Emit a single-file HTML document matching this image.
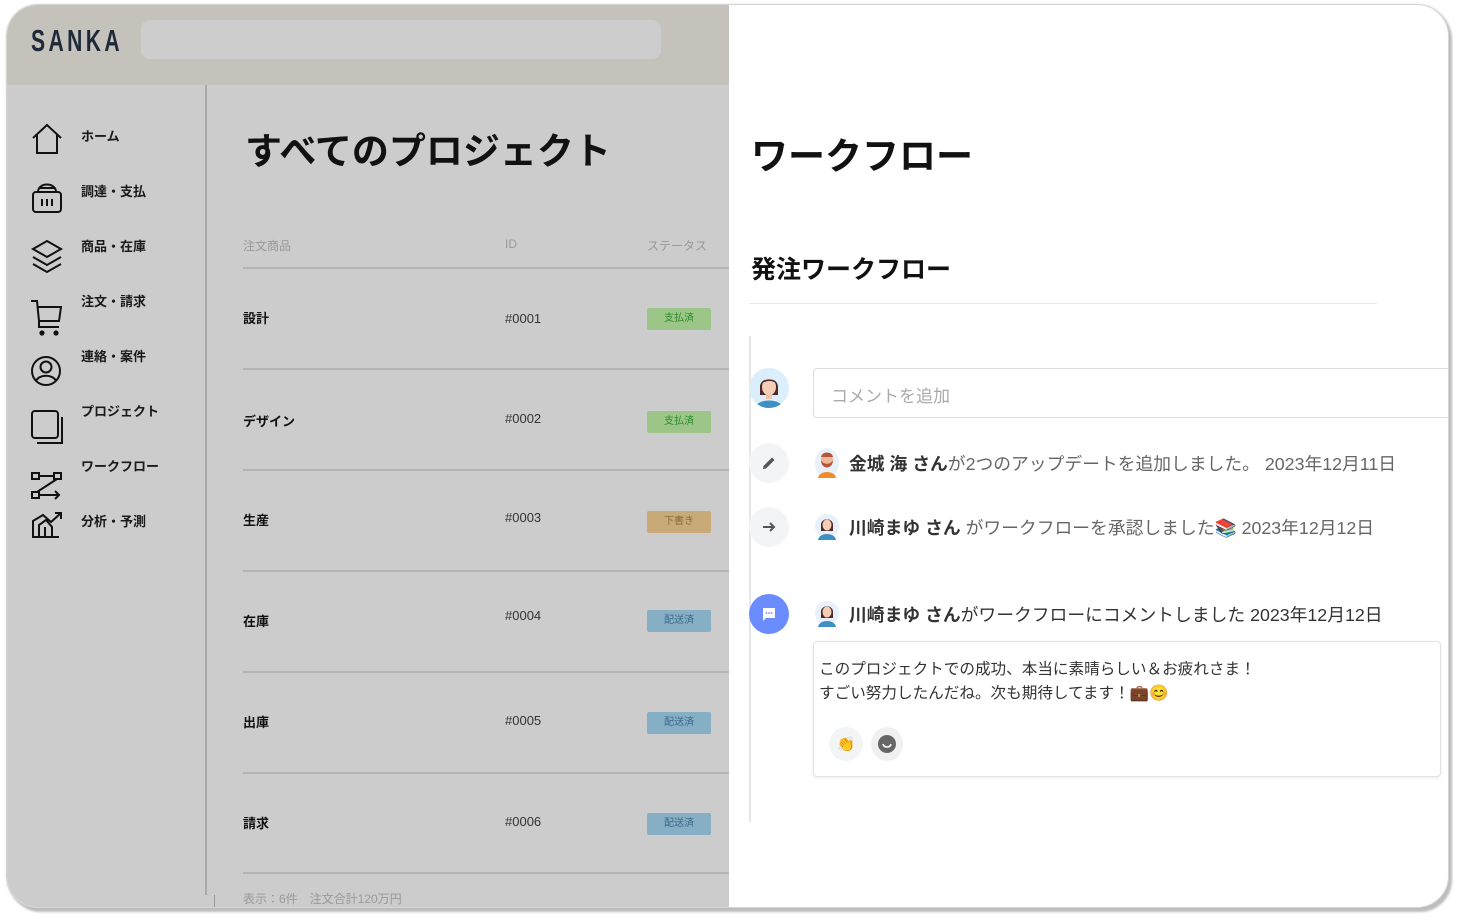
<!DOCTYPE html>
<html><head><meta charset="utf-8"><style>
*{margin:0;padding:0;box-sizing:border-box}
body{width:1464px;height:924px;background:#fff;position:relative;overflow:hidden;font-family:"Liberation Sans","Noto Sans CJK JP",sans-serif}
#dev{position:absolute;left:6px;top:4px;width:1443px;height:904px;border-radius:32px;overflow:hidden;border:1px solid #d4d4d4;box-shadow:3px 4px 2px #bdbdbd,1px 1px 3px #ccc;background:#fff}
.a{position:absolute;white-space:nowrap}
.nav{font-size:13px;font-weight:bold;color:#1a1a1a;left:74px}
.ic{position:absolute;left:22px}
.rn{left:236px;font-size:13px;font-weight:bold;color:#111}
.rid{left:498px;font-size:13px;color:#333}
.bd{position:absolute;left:640px;width:64px;height:22px;border-radius:2px;font-size:10px;text-align:center;line-height:22px}
.g{background:#9cc687;color:#2e8a2e}.t{background:#c8aa78;color:#8a6a3a}.b{background:#86aec4;color:#3a6a8a}
.hl{position:absolute;left:236px;width:486px;height:2px;background:#b4b4b4}
.ev{font-size:17.8px;color:#666;left:842px}
.ev b{color:#333;font-weight:bold}
.circ{position:absolute;width:40px;height:40px;border-radius:50%;display:flex;align-items:center;justify-content:center}
</style></head><body>
<div id="dev">
<div class="a" style="left:0;top:0;width:722px;height:80px;background:#c5c2bb"></div>
<div class="a" style="left:0;top:80px;width:722px;height:830px;background:#cccccc"></div>
<div class="a" style="left:24px;top:18px;font-size:31px;font-weight:bold;color:#1e2a3a;letter-spacing:5px;transform:scaleX(0.68);transform-origin:left">SANKA</div>
<div class="a" style="left:134px;top:15px;width:520px;height:39px;background:#cdcdcd;border-radius:9px"></div>
<div class="a" style="left:198px;top:80px;width:2px;height:810px;background:#aaa"></div>
<div class="a" style="left:207px;top:890px;width:1px;height:12px;background:#999"></div>

<svg class="ic" style="top:116px" width="36" height="36" viewBox="0 0 36 36" fill="none" stroke="#111" stroke-width="2"><path d="M4 17 L18 4 L32 17 M8 14 V32 H28 V14"/></svg>
<div class="a nav" style="top:121px">ホーム</div>
<svg class="ic" style="top:173px" width="36" height="40" viewBox="0 0 36 40" fill="none" stroke="#111" stroke-width="2"><path d="M9 14 C9 4 27 4 27 14 M10 10 H26"/><rect x="4" y="14" width="28" height="20" rx="3"/><path d="M13 21 V28 M18 21 V28 M23 21 V28"/></svg>
<div class="a nav" style="top:176px">調達・支払</div>
<svg class="ic" style="top:232px" width="36" height="40" viewBox="0 0 36 40" fill="none" stroke="#111" stroke-width="2"><path d="M18 4 L32 12 L18 20 L4 12 Z M4 20 L18 28 L32 20 M4 27 L18 35 L32 27"/></svg>
<div class="a nav" style="top:231px">商品・在庫</div>
<svg class="ic" style="top:292px" width="36" height="40" viewBox="0 0 36 40" fill="none" stroke="#111" stroke-width="2"><path d="M2 4 H8 L10 24 H30 L32 10 H9 M10 24 V30 H30"/><circle cx="13" cy="36" r="1.6" fill="#111"/><circle cx="27" cy="36" r="1.6" fill="#111"/></svg>
<div class="a nav" style="top:286px">注文・請求</div>
<svg class="ic" style="top:347px" width="36" height="40" viewBox="0 0 36 40" fill="none" stroke="#111" stroke-width="2"><circle cx="17" cy="19" r="14"/><circle cx="17" cy="15" r="5.5"/><path d="M7 29 C10 22 24 22 27 29"/></svg>
<div class="a nav" style="top:341px">連絡・案件</div>
<svg class="ic" style="top:402px" width="40" height="44" viewBox="0 0 40 44" fill="none" stroke="#111" stroke-width="2"><rect x="3" y="4" width="26" height="27" rx="3"/><path d="M33 10 V36 H8"/></svg>
<div class="a nav" style="top:396px">プロジェクト</div>
<svg class="ic" style="top:464px" width="36" height="36" viewBox="0 0 36 36" fill="none" stroke="#111" stroke-width="2"><rect x="3" y="4" width="7" height="6"/><rect x="25" y="4" width="7" height="6"/><rect x="3" y="23" width="7" height="6"/><path d="M10 7 H25 M28 10 L8 23 M10 26 H30 M26 22 L30 26 L26 30"/></svg>
<div class="a nav" style="top:451px">ワークフロー</div>
<svg class="ic" style="top:500px" width="36" height="36" viewBox="0 0 36 36" fill="none" stroke="#111" stroke-width="2"><path d="M3 32 H30 M4 32 V16 L14 10 L22 17 L32 8 M26 8 H32 V14 M10 32 V20 L17 15 L23 22 V32 M16 32 V22"/></svg>
<div class="a nav" style="top:506px">分析・予測</div>

<div class="a" style="left:238px;top:116px;font-size:37px;font-weight:bold;color:#111">すべてのプロジェクト</div>
<div class="a" style="left:236px;top:232px;font-size:12px;color:#999">注文商品</div>
<div class="a" style="left:498px;top:232px;font-size:12px;color:#999">ID</div>
<div class="a" style="left:640px;top:232px;font-size:12px;color:#999">ステータス</div>
<div class="hl" style="top:262px"></div>
<div class="a rn" style="top:303px">設計</div><div class="a rid" style="top:306px">#0001</div><div class="bd g" style="top:303px">支払済</div>
<div class="hl" style="top:363px"></div>
<div class="a rn" style="top:406px">デザイン</div><div class="a rid" style="top:406px">#0002</div><div class="bd g" style="top:406px">支払済</div>
<div class="hl" style="top:464px"></div>
<div class="a rn" style="top:505px">生産</div><div class="a rid" style="top:505px">#0003</div><div class="bd t" style="top:506px">下書き</div>
<div class="hl" style="top:565px"></div>
<div class="a rn" style="top:606px">在庫</div><div class="a rid" style="top:603px">#0004</div><div class="bd b" style="top:605px">配送済</div>
<div class="hl" style="top:666px"></div>
<div class="a rn" style="top:707px">出庫</div><div class="a rid" style="top:708px">#0005</div><div class="bd b" style="top:707px">配送済</div>
<div class="hl" style="top:767px"></div>
<div class="a rn" style="top:808px">請求</div><div class="a rid" style="top:809px">#0006</div><div class="bd b" style="top:808px">配送済</div>
<div class="hl" style="top:867px"></div>
<div class="a" style="left:236px;top:885px;font-size:12px;color:#999">表示：6件　注文合計120万円</div>

<div class="a" style="left:744px;top:121px;font-size:37px;font-weight:bold;color:#111">ワークフロー</div>
<div class="a" style="left:744px;top:245px;font-size:25px;font-weight:bold;color:#111">発注ワークフロー</div>
<div class="a" style="left:742px;top:298px;width:628px;height:1px;background:#eaeaea"></div>
<div class="a" style="left:742px;top:331px;width:2px;height:486px;background:#e6e6e6"></div>

<div class="circ" style="left:742px;top:363px;background:#dbeefc;overflow:hidden">
<svg width="40" height="40" viewBox="0 0 40 40"><path d="M6 40 C8 30 32 30 34 40Z" fill="#3d8fc4"/><rect x="17" y="25" width="6" height="6" fill="#f2c2a8"/><path d="M11 20 C10 8 30 8 29 20 L29 27 L11 27Z" fill="#4a2a2a"/><ellipse cx="20" cy="19" rx="7" ry="8.5" fill="#f6cdb5"/><path d="M12 16 C14 10 26 10 28 16 C24 12 17 12 12 16Z" fill="#4a2a2a"/></svg></div>
<div class="a" style="left:806px;top:363px;width:650px;height:50px;border:1px solid #dcdcdc;border-radius:4px"></div>
<div class="a" style="left:824px;top:377px;font-size:17px;color:#aaa">コメントを追加</div>

<div class="circ" style="left:742px;top:438px;background:#f3f4f6"><svg width="16" height="16" viewBox="0 0 16 16"><path d="M2 14 L2.5 11 L11 2.5 L13.5 5 L5 13.5Z" fill="#555"/></svg></div>
<svg class="a" style="left:808px;top:443px" width="24" height="30" viewBox="0 0 24 30"><ellipse cx="12" cy="15" rx="12" ry="15" fill="#e8f1fa"/><path d="M3 30 C4 22 20 22 21 30Z" fill="#f08a2a"/><ellipse cx="12" cy="12" rx="6" ry="7" fill="#f0b898"/><path d="M6 12 C6 22 18 22 18 12 C16 17 8 17 6 12Z" fill="#b5543a"/><path d="M6 9 C7 3 17 3 18 9Z" fill="#b5543a"/></svg>
<div class="a ev" style="top:445px"><b>金城 海 さん</b>が2つのアップデートを追加しました。 2023年12月11日</div>

<div class="circ" style="left:742px;top:502px;background:#f3f4f6"><svg width="16" height="16" viewBox="0 0 16 16" fill="none" stroke="#555" stroke-width="2"><path d="M2 8 H13 M9 4 L13 8 L9 12"/></svg></div>
<svg class="a" style="left:808px;top:507px" width="24" height="28" viewBox="0 0 24 28"><circle cx="12" cy="14" r="12" fill="#e8f1fa"/><path d="M3 28 C4 20 20 20 21 28Z" fill="#3d8fc4"/><path d="M6 14 C5 5 19 5 18 14 L18 19 L6 19Z" fill="#4a2a2a"/><ellipse cx="12" cy="13" rx="4.5" ry="5.5" fill="#f6cdb5"/></svg>
<div class="a ev" style="top:509px"><b>川崎まゆ さん</b> がワークフローを承認しました📚 2023年12月12日</div>

<div class="circ" style="left:742px;top:589px;background:#6b8cff"><svg width="16" height="16" viewBox="0 0 16 16"><path d="M2 2 H14 V12 H5 L2 15Z" fill="#fff"/><circle cx="5.5" cy="7" r="0.9" fill="#6b8cff"/><circle cx="8" cy="7" r="0.9" fill="#6b8cff"/><circle cx="10.5" cy="7" r="0.9" fill="#6b8cff"/></svg></div>
<svg class="a" style="left:808px;top:594px" width="24" height="28" viewBox="0 0 24 28"><circle cx="12" cy="14" r="12" fill="#e8f1fa"/><path d="M3 28 C4 20 20 20 21 28Z" fill="#3d8fc4"/><path d="M6 14 C5 5 19 5 18 14 L18 19 L6 19Z" fill="#4a2a2a"/><ellipse cx="12" cy="13" rx="4.5" ry="5.5" fill="#f6cdb5"/></svg>
<div class="a ev" style="top:596px;color:#333"><b>川崎まゆ さん</b>がワークフローにコメントしました 2023年12月12日</div>

<div class="a" style="left:806px;top:636px;width:628px;height:136px;border:1px solid #e2e2e2;border-radius:4px;box-shadow:0 1px 3px rgba(0,0,0,0.08)"></div>
<div class="a" style="left:812px;top:653px;font-size:15.6px;color:#333;line-height:24px">このプロジェクトでの成功、本当に素晴らしい＆お疲れさま！<br>すごい努力したんだね。次も期待してます！💼😊</div>
<div class="circ" style="left:822px;top:722px;width:34px;height:34px;background:#f3f4f6;font-size:15px">👏</div>
<div class="circ" style="left:864px;top:722px;width:32px;height:34px;background:#f0f0f0"><svg width="20" height="20" viewBox="0 0 20 20"><circle cx="10" cy="10" r="9" fill="#666"/><path d="M6 10 C7 14 13 14 14 10" stroke="#fff" stroke-width="1.6" fill="none"/></svg></div>
</div>
</body></html>
